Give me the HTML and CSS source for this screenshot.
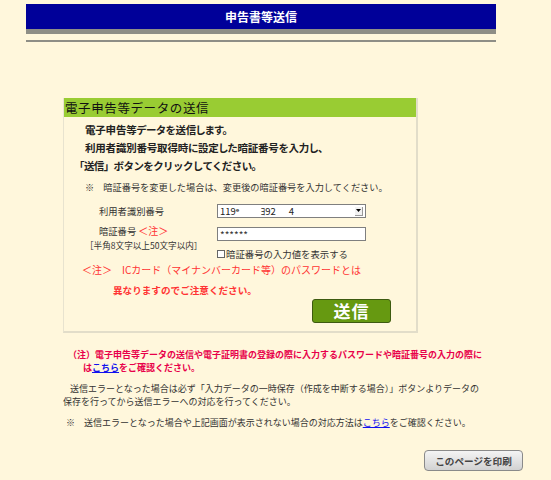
FILE: index.html
```html
<!DOCTYPE html>
<html lang="ja">
<head>
<meta charset="utf-8">
<link rel="stylesheet" href="styles.css">
</head>
<body>
<div class="page">
  <div class="header">
    <h1 class="header-title">申告書等送信</h1>
  </div>
  <div class="rule"></div>

  <div class="panel">
    <div class="panel-title">電子申告等データの送信</div>
    <div class="panel-body">
      <p class="lead">電子申告等データを送信します。</p>
      <p class="lead">利用者識別番号取得時に設定した暗証番号を入力し、</p>
      <p class="lead lead-bracket">「送信」ボタンをクリックしてください。</p>
      <p class="small-note">※　暗証番号を変更した場合は、変更後の暗証番号を入力してください。</p>

      <div class="form">
        <div class="form-label">利用者識別番号</div>
        <div class="select">
          <span class="select-value">119ᵉ          ﾖ92      4</span>
          <span class="select-btn"><svg width="5" height="3" viewBox="0 0 5 3"><path d="M0 0h5L2.5 3z" fill="#000"/></svg></span>
        </div>

        <div class="form-label pw-label">
          <div class="pw-name">暗証番号 <span class="red">＜注＞</span></div>
          <div class="hint">［半角8文字以上50文字以内］</div>
        </div>
        <div class="pw-col">
          <input class="pw-input" type="text" value="******" readonly>
          <label class="check"><span class="box"></span>暗証番号の入力値を表示する</label>
        </div>
      </div>

      <p class="warn">＜注＞　ICカード（マイナンバーカード等）のパスワードとは</p>
      <p class="warn-2">異なりますのでご注意ください。</p>

      <div class="send-row">
        <button class="send-btn">送信</button>
      </div>
    </div>
  </div>

  <div class="notes">
    <p class="note-red">（注）電子申告等データの送信や電子証明書の登録の際に入力するパスワードや暗証番号の入力の際に</p>
    <p class="note-red-2">は<a href="#" class="link">こちら</a>をご確認ください。</p>
    <p class="note note-1">送信エラーとなった場合は必ず「入力データの一時保存（作成を中断する場合）」ボタンよりデータの</p>
    <p class="note">保存を行ってから送信エラーへの対応を行ってください。</p>
    <p class="note note-3">※　送信エラーとなった場合や上記画面が表示されない場合の対応方法は<a href="#" class="link">こちら</a>をご確認ください。</p>
  </div>

  <div class="print-row">
    <button class="print-btn">このページを印刷</button>
  </div>
</div>
</body>
</html>
```

FILE: styles.css
```css
html, body {
  margin: 0;
  padding: 0;
  background: #fff7dc;
}
body {
  font-family: "Noto Sans CJK JP", "Noto Sans", sans-serif;
  color: #222;
}
p { margin: 0; }
.page {
  padding-top: 4px;
  width: 551px;
  height: 476px;
  box-sizing: border-box;
}
.header {
  margin-left: 26px;
  width: 470px;
  height: 25px;
  background: #000099;
  border-bottom: 5px solid #8e8e86;
  display: flex;
  align-items: center;
  justify-content: center;
}
.header-title {
  margin: 0;
  color: #fff;
  font-size: 12px;
  font-weight: bold;
  line-height: 1;
}
.rule {
  margin-left: 26px;
  width: 470px;
  height: 2px;
  background: #8e8e86;
  margin-top: 6px;
}
.panel {
  margin-top: 56px;
  margin-left: 63px;
  width: 355px;
  height: 235px;
  box-sizing: border-box;
  border-right: 2px solid #e2ddc9;
  border-bottom: 2px solid #e2ddc9;
  border-left: 1px solid #e8e3cf;
}
.panel-title {
  height: 19px;
  background: #99cc33;
  font-size: 12.5px;
  line-height: 19px;
  color: #111;
  padding-left: 1px;
  letter-spacing: 0.6px;
}
.panel-body {
  padding-left: 21px;
  padding-top: 4px;
}
.lead {
  font-size: 10.5px;
  font-weight: bold;
  line-height: 18px;
  font-feature-settings: "palt";
  letter-spacing: -0.2px;
  color: #222;
}
.lead-bracket {
  margin-left: -11px;
  font-feature-settings: normal;
  letter-spacing: -0.6px;
}
.small-note {
  margin-top: 5px;
  font-size: 9.2px;
  line-height: 14px;
  color: #333;
}
.form {
  margin-top: 10px;
  display: grid;
  grid-template-columns: 132px 149px;
  row-gap: 9px;
}
.form-label {
  font-size: 9.3px;
  color: #333;
  padding-left: 14px;
  line-height: 14px;
}
.pw-label { padding-left: 0; }
.pw-name {
  padding-left: 14px;
  margin-top: -2px;
  line-height: 12px;
  white-space: nowrap;
}
.hint {
  margin-top: 2px;
  font-size: 8.6px;
  line-height: 12px;
  color: #333;
  white-space: nowrap;
}
.red { color: #ff3333; font-size: 10px; }
.select {
  height: 14px;
  box-sizing: border-box;
  border: 1px solid #7f7f7f;
  background: #fff;
  display: flex;
  align-items: center;
  justify-content: space-between;
  font-size: 9.5px;
  color: #222;
}
.select-value {
  white-space: pre;
  padding-left: 2px;
  line-height: 12px;
}
.select-btn {
  width: 8px;
  height: 9px;
  margin-right: 2px;
  background: #f2f2f2;
  border-right: 1px solid #999;
  border-bottom: 1px solid #999;
  box-sizing: border-box;
  display: flex;
  align-items: center;
  justify-content: center;
}
.pw-col {
  display: flex;
  flex-direction: column;
}
.pw-input {
  margin: 0;
  width: 149px;
  height: 14px;
  box-sizing: border-box;
  border: 1px solid #7f7f7f;
  background: #fff;
  font-family: "Noto Sans CJK JP", sans-serif;
  font-size: 10px;
  padding: 0 2px;
  color: #333;
  outline: none;
}
.check {
  margin-top: 7px;
  display: flex;
  align-items: center;
  font-size: 9.4px;
  color: #333;
  line-height: 12px;
}
.box {
  width: 6px;
  height: 6px;
  border: 1px solid #666;
  background: #fff;
  margin-right: 1px;
}
.warn {
  margin-top: 3px;
  margin-left: -3px;
  font-size: 10px;
  line-height: 14px;
  color: #ff3333;
  white-space: nowrap;
}
.warn-2 {
  margin-top: 6px;
  margin-left: 28px;
  font-size: 9.6px;
  line-height: 14px;
  font-weight: bold;
  color: #ff3333;
}
.send-row {
  display: flex;
  justify-content: flex-end;
  padding-right: 25px;
  margin-top: 2px;
}
.send-btn {
  width: 79px;
  height: 24px;
  border: 1px solid #3d5a10;
  border-radius: 3px;
  background: #669911;
  color: #fff;
  font-family: "Noto Sans CJK JP", sans-serif;
  font-size: 17px;
  font-weight: bold;
  line-height: 20px;
  padding: 0;
  letter-spacing: 1px;
}
.notes {
  margin-top: 15px;
  margin-left: 63px;
}
.note-red, .note-red-2 {
  font-size: 9px;
  font-weight: bold;
  color: #e8004a;
  line-height: 13px;
  white-space: nowrap;
}
.note-red { margin-left: 5px; }
.note-red-2 { margin-left: 20px; }
.link { color: #1111ee; }
.note {
  font-size: 9px;
  color: #333;
  line-height: 13px;
  white-space: nowrap;
}
.note-1 { margin-top: 8px; margin-left: 7px; }
.note-3 { margin-top: 8px; margin-left: 3px; }
.print-row {
  display: flex;
  justify-content: flex-end;
  padding-right: 28px;
  margin-top: 21px;
}
.print-btn {
  width: 99px;
  height: 21px;
  border: 1px solid #8a8a8a;
  border-radius: 4px;
  background: linear-gradient(#f4f4f4, #d2d2d2);
  font-family: "Noto Sans CJK JP", sans-serif;
  font-size: 9.6px;
  font-weight: bold;
  color: #444;
  padding: 0;
}
```
